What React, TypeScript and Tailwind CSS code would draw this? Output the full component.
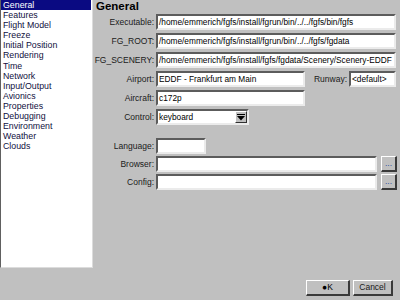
import React from "react";

const items = [
  "General",
  "Features",
  "Flight Model",
  "Freeze",
  "Initial Position",
  "Rendering",
  "Time",
  "Network",
  "Input/Output",
  "Avionics",
  "Properties",
  "Debugging",
  "Environment",
  "Weather",
  "Clouds",
];

const font = { fontFamily: '"Liberation Sans", Arial, sans-serif' };

function Field({ value = "", className = "" }: { value?: string; className?: string }) {
  return (
    <div
      className={
        "h-[16px] min-w-0 bg-white border-t-2 border-l-2 border-t-[#5c5c5c] border-l-[#5c5c5c] border-b-2 border-r-2 border-b-[#ebebeb] border-r-[#ebebeb] pl-[1px] text-[8.3px] leading-[12px] text-black whitespace-nowrap overflow-hidden " +
        className
      }
    >
      {value}
    </div>
  );
}

function Label({ text, className = "" }: { text: string; className?: string }) {
  return (
    <div className={"shrink-0 text-[8.5px] leading-[16px] text-[#1a1a1a] text-right whitespace-nowrap " + className}>
      {text}
    </div>
  );
}

function RaisedButton({ children, className = "" }: { children: React.ReactNode; className?: string }) {
  return (
    <div
      className={
        "shrink-0 bg-[#c0c0c0] border-t border-l border-t-white border-l-white border-b-2 border-r-2 border-b-[#3a3a3a] border-r-[#3a3a3a] flex items-center justify-center text-[8.5px] text-[#1a1a1a] " +
        className
      }
    >
      {children}
    </div>
  );
}

export default function App() {
  return (
    <div className="w-[400px] h-[300px] bg-[#c0c0c0] flex flex-col overflow-hidden" style={font}>
      <div className="flex h-[268px] shrink-0">
        <div className="shrink-0 w-[93px] h-[268px] bg-white border-l border-l-[#606060] border-r border-r-[#dcdcdc] border-b border-b-[#dcdcdc] pr-[1px]">
          {items.map((it, i) => (
            <div
              key={it}
              className={
                "h-[10.1px] leading-[10.1px] text-[8.8px] pl-[2px] whitespace-nowrap " +
                (i === 0 ? "bg-[#0a0a82] text-white" : "text-[#101040]")
              }
            >
              {it}
            </div>
          ))}
        </div>
        <div className="flex-1 min-w-0 flex flex-col">
          <div className="h-[14px] pl-[3px] text-[11.5px] font-bold leading-[12px] text-black">General</div>
          <div className="flex flex-col gap-[3px] pr-[4px]">
            <div className="flex gap-[2px]">
              <Label text="Executable:" className="w-[61px]" />
              <Field className="flex-1" value="/home/emmerich/fgfs/install/fgrun/bin/../../fgfs/bin/fgfs" />
            </div>
            <div className="flex gap-[2px]">
              <Label text="FG_ROOT:" className="w-[61px]" />
              <Field className="flex-1" value="/home/emmerich/fgfs/install/fgrun/bin/../../fgfs/fgdata" />
            </div>
            <div className="flex gap-[2px]">
              <Label text="FG_SCENERY:" className="w-[61px]" />
              <Field className="flex-1" value="/home/emmerich/fgfs/install/fgfs/fgdata/Scenery/Scenery-EDDF" />
            </div>
            <div className="flex gap-[2px]">
              <Label text="Airport:" className="w-[61px]" />
              <Field className="w-[149px] shrink-0" value="EDDF - Frankfurt am Main" />
              <Label text="Runway:" className="w-[40px]" />
              <Field className="flex-1" value="<default>" />
            </div>
            <div className="flex gap-[2px]">
              <Label text="Aircraft:" className="w-[61px]" />
              <Field className="w-[149px] shrink-0" value="c172p" />
            </div>
            <div className="flex gap-[2px]">
              <Label text="Control:" className="w-[61px]" />
              <div className="shrink-0 w-[93px] h-[16px] bg-white border-t-2 border-l-2 border-t-[#5c5c5c] border-l-[#5c5c5c] border-b-2 border-r-2 border-b-[#ebebeb] border-r-[#ebebeb] flex">
                <div className="flex-1 pl-[1px] text-[8.3px] leading-[12px] text-black">keyboard</div>
                <div className="w-[12px] h-[12px] bg-[#c0c0c0] border-t border-l border-t-white border-l-white border-b border-r border-b-[#303030] border-r-[#303030] flex items-center justify-center">
                  <svg width="8" height="7" viewBox="0 0 8 7">
                    <rect x="0" y="0" width="8" height="1" fill="#000" />
                    <polygon points="0,2 8,2 4,6.5" fill="#000" />
                  </svg>
                </div>
              </div>
            </div>
          </div>
          <div className="h-[13px]" />
          <div className="flex flex-col gap-[2px] pr-[3px]">
            <div className="flex gap-[2px]">
              <Label text="Language:" className="w-[61px]" />
              <Field className="w-[50px] shrink-0" />
            </div>
            <div className="flex gap-[2px] items-start">
              <Label text="Browser:" className="w-[61px]" />
              <Field className="flex-1" />
              <RaisedButton className="w-[16px] h-[16px] ml-[2px] leading-[8px]">
                <span className="text-[#3050a0] -mt-[2px]">...</span>
              </RaisedButton>
            </div>
            <div className="flex gap-[2px] items-start">
              <Label text="Config:" className="w-[61px]" />
              <Field className="flex-1" />
              <RaisedButton className="w-[16px] h-[16px] ml-[2px] leading-[8px]">
                <span className="text-[#3050a0] -mt-[2px]">...</span>
              </RaisedButton>
            </div>
          </div>
        </div>
      </div>
      <div className="flex-1 flex justify-end items-start pt-[12px] pr-[7px] gap-[3px]">
        <RaisedButton className="w-[44px] h-[16px]">
          <span className="text-black">●K</span>
        </RaisedButton>
        <RaisedButton className="w-[40px] h-[16px]">Cancel</RaisedButton>
      </div>
    </div>
  );
}
